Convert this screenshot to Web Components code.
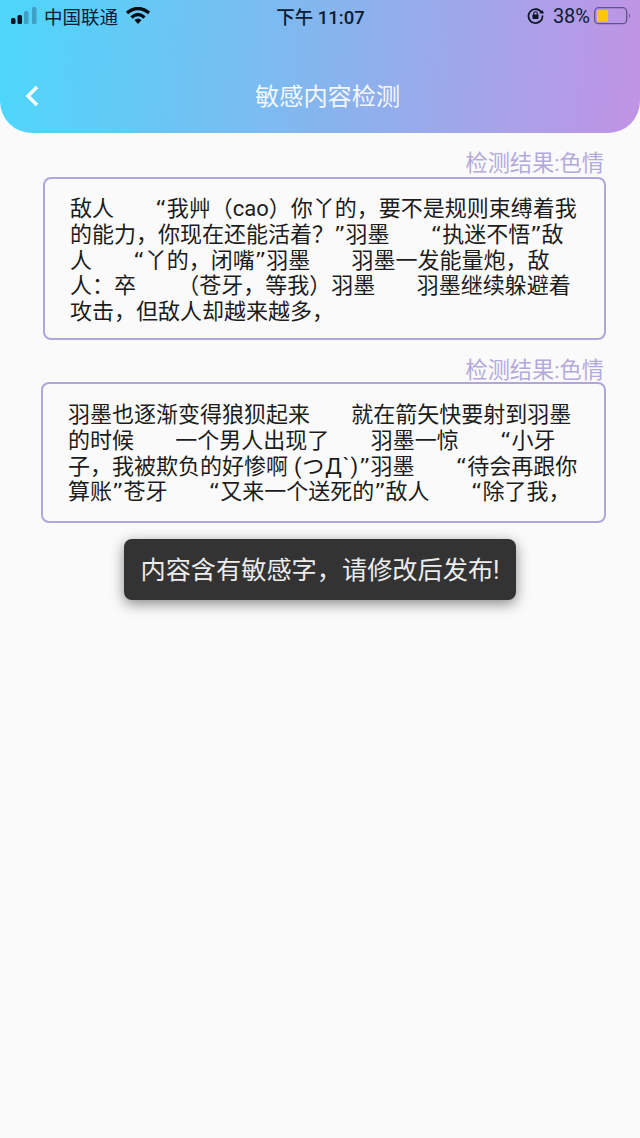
<!DOCTYPE html>
<html lang="zh">
<head>
<meta charset="utf-8">
<title>敏感内容检测</title>
<style>
    html, body {
        margin: 0;
        height: 100%;
    }

    body {
        background: #fafafa;
        font-family: Roboto, "Noto Sans CJK SC", sans-serif;
    }

    .q {
        font-family: "DejaVu Sans", sans-serif;
    }

    .kao {
        letter-spacing: 0.9px;
    }
</style>
</head>
<body>
<app-page>
    <app-header title="敏感内容检测"></app-header>
    <result-card label="检测结果:色情" style="--card-left: 43px; --card-height: 163px; --text-top: 17px; --text-left: 25px;">敌人       <span class="q">“</span>我艸（cao）你丫的，要不是规则束缚着我<br>的能力，你现在还能活着？<span class="q">”</span>羽墨       <span class="q">“</span>执迷不悟<span class="q">”</span>敌<br>人       <span class="q">“</span>丫的，闭嘴<span class="q">”</span>羽墨       羽墨一发能量炮，敌<br>人：卒       （苍牙，等我）羽墨       羽墨继续躲避着<br>攻击，但敌人却越来越多，</result-card>
    <result-card label="检测结果:色情" style="--card-left: 41px; --card-height: 141px; --text-top: 18px; --text-left: 25px; --label-top: 17px; --box-gap: -2px;">羽墨也逐渐变得狼狈起来       就在箭矢快要射到羽墨<br>的时候       一个男人出现了       羽墨一惊       <span class="q">“</span>小牙<br>子，我被欺负的好惨啊 <span class="kao">(つД`)</span><span class="q">”</span>羽墨       <span class="q">“</span>待会再跟你<br>算账<span class="q">”</span>苍牙       <span class="q">“</span>又来一个送死的<span class="q">”</span>敌人       <span class="q">“</span>除了我，</result-card>
    <app-toast>内容含有敏感字，请修改后发布!</app-toast>
</app-page>

<script>
class AppPage extends HTMLElement {
    constructor() {
        super();
        this.attachShadow({ mode: 'open' });
        this.shadowRoot.innerHTML = `
            <style>
                :host {
                    display: flex;
                    flex-direction: column;
                    position: relative;
                    min-height: 1138px;
                    overflow: hidden;
                }
            </style>
            <slot></slot>
        `;
    }
}

class AppHeader extends HTMLElement {
    constructor() {
        super();
        this.attachShadow({ mode: 'open' });
        this.shadowRoot.innerHTML = `
            <style>
                :host {
                    display: flex;
                    flex-direction: column;
                    height: 133px;
                    border-radius: 0 0 32px 32px;
                    background: linear-gradient(95deg, #4dd7fb 0%, #7fb9ef 45%, #c193e5 100%);
                }

                #status {
                    display: flex;
                    align-items: center;
                    height: 31px;
                    padding: 0 8px 0 11px;
                    color: #0b1c33;
                    font-size: 18.5px;
                }

                #left, #right {
                    flex: 1;
                    display: flex;
                    align-items: center;
                }

                #right {
                    justify-content: flex-end;
                }

                #carrier {
                    margin: 0 8px 0 7px;
                }

                #time {
                    margin-right: 2px;
                    font-weight: 500;
                }

                #percent {
                    margin: 0 4px 0 9px;
                    font-size: 20px;
                }

                #nav {
                    flex: 1;
                    display: flex;
                    align-items: center;
                    padding-top: 24px;
                }

                #back {
                    display: flex;
                    margin: 3px 0 0 24px;
                }

                #title {
                    margin-left: 215px;
                    color: #f4f8fe;
                    font-size: 24.2px;
                }

                svg {
                    display: block;
                }
            </style>
            <div id="status">
                <div id="left">
                    <svg width="26" height="18" viewBox="0 0 26 18">
                        <rect x="0" y="11" width="4.5" height="6" rx="1.5" fill="#0b1422"/>
                        <rect x="6.5" y="8" width="4.5" height="9" rx="1.5" fill="#0b1422"/>
                        <rect x="13" y="4" width="4.5" height="13" rx="1.5" fill="#3f9fc6"/>
                        <rect x="21" y="0" width="4.5" height="17" rx="1.5" fill="#3f9fc6"/>
                    </svg>
                    <span id="carrier">中国联通</span>
                    <svg width="24" height="18" viewBox="0 0 24 18">
                        <path d="M1 6 Q12 -3 23 6" fill="none" stroke="#070b14" stroke-width="3.4"/>
                        <path d="M5.5 10.5 Q12 4.5 18.5 10.5" fill="none" stroke="#070b14" stroke-width="3.4"/>
                        <path d="M8.5 13 Q12 10 15.5 13 L12 17 Z" fill="#070b14"/>
                    </svg>
                </div>
                <span id="time">下午 11:07</span>
                <div id="right">
                    <svg width="17" height="17" viewBox="0 0 17 17">
                        <path d="M14.6 5.6 A7 7 0 1 0 15.5 8.5" fill="none" stroke="#0b1422" stroke-width="1.7"/>
                        <path d="M12.4 6.4 L17 6.4 L15.4 3 Z" fill="#0b1422"/>
                        <rect x="5.5" y="7.5" width="6" height="4.5" rx="0.7" fill="#0b1422"/>
                        <path d="M6.7 8 V6.5 a1.8 1.8 0 0 1 3.6 0 V8" fill="none" stroke="#0b1422" stroke-width="1.1"/>
                    </svg>
                    <span id="percent">38%</span>
                    <svg width="38" height="18" viewBox="0 0 38 18">
                        <rect x="0.7" y="0.7" width="32" height="16" rx="4" fill="none" stroke="#5b5487" stroke-width="1.3"/>
                        <rect x="3" y="3" width="11" height="11.5" rx="1.5" fill="#fcc70a"/>
                        <path d="M35 6.5 a3 3 0 0 1 0 4.5 Z" fill="#5b5487"/>
                    </svg>
                </div>
            </div>
            <div id="nav">
                <span id="back">
                    <svg width="16" height="24" viewBox="0 0 16 24">
                        <path d="M13 3 L4 12 L13 21" fill="none" stroke="#f7fbff" stroke-width="3.6"/>
                    </svg>
                </span>
                <span id="title"></span>
            </div>
        `;
    }

    connectedCallback() {
        this.shadowRoot.querySelector('#title').textContent = this.getAttribute('title');
    }
}

class ResultCard extends HTMLElement {
    constructor() {
        super();
        this.attachShadow({ mode: 'open' });
        this.shadowRoot.innerHTML = `
            <style>
                :host {
                    display: flex;
                    flex-direction: column;
                    margin: var(--label-top, 17px) 34px 0 var(--card-left);
                }

                #label {
                    align-self: flex-end;
                    margin-right: 2px;
                    color: #b4a9dd;
                    font-size: 22.2px;
                    line-height: 27px;
                }

                #box {
                    box-sizing: border-box;
                    height: var(--card-height);
                    margin-top: var(--box-gap, 0);
                    padding: var(--text-top) 0 0 var(--text-left);
                    border: 2px solid #b1a6da;
                    border-radius: 8px;
                    color: #1c1c1c;
                    font-size: 22px;
                    line-height: 25.8px;
                    white-space: pre;
                    word-spacing: 0.45px;
                }
            </style>
            <div id="label"></div>
            <div id="box"><slot></slot></div>
        `;
    }

    connectedCallback() {
        this.shadowRoot.querySelector('#label').textContent = this.getAttribute('label');
    }
}

class AppToast extends HTMLElement {
    constructor() {
        super();
        this.attachShadow({ mode: 'open' });
        this.shadowRoot.innerHTML = `
            <style>
                :host {
                    position: absolute;
                    left: 124px;
                    top: 539px;
                    box-sizing: border-box;
                    width: 392px;
                    height: 61px;
                    padding-bottom: 3px;
                    display: flex;
                    align-items: center;
                    justify-content: center;
                    border-radius: 8px;
                    background: #333333;
                    box-shadow: 0 4px 14px rgba(0, 0, 0, 0.45);
                    color: #ececec;
                    font-size: 25.2px;
                    white-space: nowrap;
                }
            </style>
            <slot></slot>
        `;
    }
}

customElements.define('app-page', AppPage);
customElements.define('app-header', AppHeader);
customElements.define('result-card', ResultCard);
customElements.define('app-toast', AppToast);
</script>
</body>
</html>
